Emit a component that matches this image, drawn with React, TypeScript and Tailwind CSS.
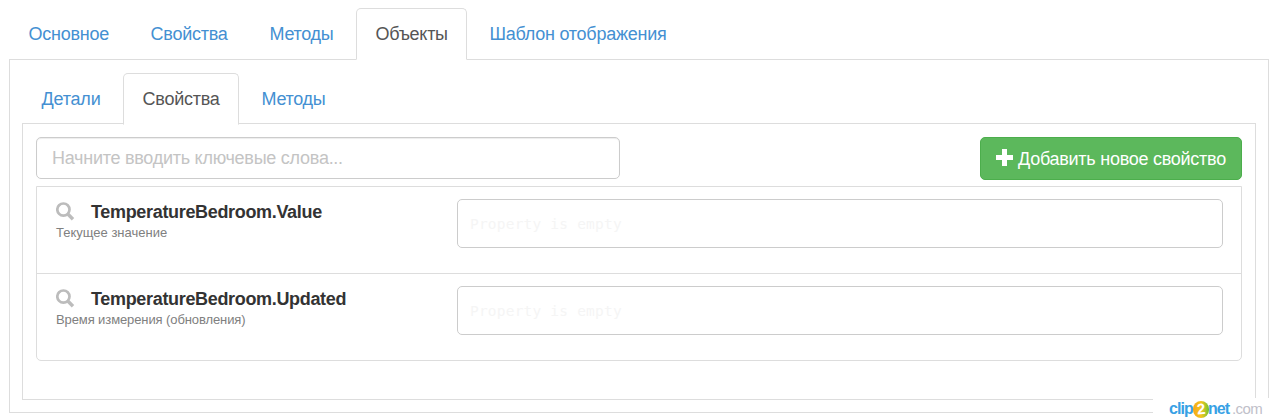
import type { ReactNode } from 'react';

function Tab({ active, className, children }: { active?: boolean; className: string; children: ReactNode }) {
  return (
    <a
      href="#"
      className={`flex shrink-0 items-center whitespace-nowrap rounded-t-[5px] border pl-[18.5px] ${
        active ? 'border-[#ddd] border-b-white bg-white text-[#555]' : 'border-transparent text-[#4490d2]'
      } ${className}`}
    >
      {children}
    </a>
  );
}

function SearchIcon() {
  return (
    <svg width="19" height="19" viewBox="0 0 19 19" fill="none" stroke="#bcbcbc" className="-mr-px block -translate-y-px">
      <circle cx="7.4" cy="7.6" r="6.1" strokeWidth="2.7" />
      <path d="M11.8 12L17 17.2" strokeWidth="3.4" />
    </svg>
  );
}

function PropertyRow({ name, nameClass, note, noteClass }: { name: string; nameClass: string; note: string; noteClass: string }) {
  return (
    <div className="flex h-[87px] pl-[19px] pt-[12px]">
      <div className="w-[401px] shrink-0 pt-[3px]">
        <div className="flex h-[20px] items-center">
          <SearchIcon />
          <b className={`ml-[17px] whitespace-nowrap text-[#333] ${nameClass}`}>{name}</b>
        </div>
        <div className={`whitespace-nowrap pt-px text-[13px] leading-[20px] text-[#808080] ${noteClass}`}>{note}</div>
      </div>
      <div className="flex h-[49px] w-[766px] items-center rounded-[5px] border border-[#ccc] pl-[12px] font-['DejaVu_Sans_Mono',monospace] text-[14.5px] tracking-[0.2px] text-[#f5f5f5]">
        Property is empty
      </div>
    </div>
  );
}

export default function App() {
  return (
    <div className="relative h-[420px] w-[1277px] overflow-hidden bg-white pl-[9px] pt-[8px] font-['Liberation_Sans',Arial,sans-serif] text-[18px] leading-[26px] text-[#333]">
      <nav className="flex h-[52px]">
        <Tab className="mr-[2px] w-[120px] tracking-[-0.24px]">Основное</Tab>
        <Tab className="mr-[2px] w-[117px] tracking-[-0.24px]">Свойства</Tab>
        <Tab className="mr-[1px] w-[105px] tracking-[-0.3px]">Методы</Tab>
        <Tab active className="z-10 mr-[3px] w-[111px] tracking-[-0.28px]">Объекты</Tab>
        <Tab className="w-[220px] tracking-[-0.25px]">Шаблон отображения</Tab>
      </nav>
      <div className="-mt-px h-[354px] w-[1260px] border border-[#ddd] px-[12px] pt-[13px]">
        <nav className="flex h-[52px]">
          <Tab className="mr-[2px] w-[99px] tracking-[-0.2px]">Детали</Tab>
          <Tab active className="z-10 mr-[3px] w-[116px] tracking-[-0.24px]">Свойства</Tab>
          <Tab className="w-[110px] tracking-[-0.3px]">Методы</Tab>
        </nav>
        <div className="-mt-[2px] h-[277px] border border-[#ddd] px-[13px] pt-[13px]">
          <div className="flex h-[49px] items-start justify-between">
            <input
              type="text"
              placeholder="Начните вводить ключевые слова..."
              className="h-[42px] w-[584px] rounded-[5px] border border-[#ccc] px-[15px] tracking-[-0.26px] shadow-[inset_0_1px_1px_rgba(0,0,0,0.075)] outline-none placeholder:text-[#c4c4c4] placeholder:opacity-100"
            />
            <button className="flex h-[43px] w-[262px] items-center whitespace-nowrap rounded-[5px] border border-[#4cae4c] bg-[#5cb85c] pl-[15px] tracking-[-0.26px] text-white">
              <svg width="17" height="17" viewBox="0 0 17 17" fill="#fff" className="mr-[5px] shrink-0 -translate-y-px">
                <path d="M6 0H11V6H17V11H11V17H6V11H0V6H6Z" />
              </svg>
              <span>Добавить новое свойство</span>
            </button>
          </div>
          <div className="h-[175px] rounded-b-[5px] border border-[#ddd]">
            <PropertyRow name="TemperatureBedroom.Value" nameClass="tracking-[-0.33px]" note="Текущее значение" noteClass="tracking-[0px]" />
            <div className="-mt-px border-t border-[#ddd]">
              <PropertyRow name="TemperatureBedroom.Updated" nameClass="tracking-[-0.33px]" note="Время измерения (обновления)" noteClass="tracking-[-0.1px]" />
            </div>
          </div>
        </div>
      </div>
      <div className="absolute bottom-0 right-0 flex h-[22px] w-[124px] items-center bg-white pl-[16px] text-[16px] leading-[20px]">
        <b className="w-[25px] tracking-[-0.9px] text-[#38a1e5]">clip</b>
        <span className="relative z-10 -mx-px flex h-[17px] w-[16px] shrink-0 items-center justify-center rounded-full bg-linear-to-r from-[#f5a81c] via-[#f4c41c] to-[#65c32f] text-[15px] font-bold text-white">
          <span className="-rotate-6">2</span>
        </span>
        <b className="w-[24px] tracking-[-0.9px] text-[#38a1e5]">net</b>
        <span className="text-[15px] tracking-[-0.6px] text-[#bfc0c9]">.com</span>
      </div>
    </div>
  );
}
